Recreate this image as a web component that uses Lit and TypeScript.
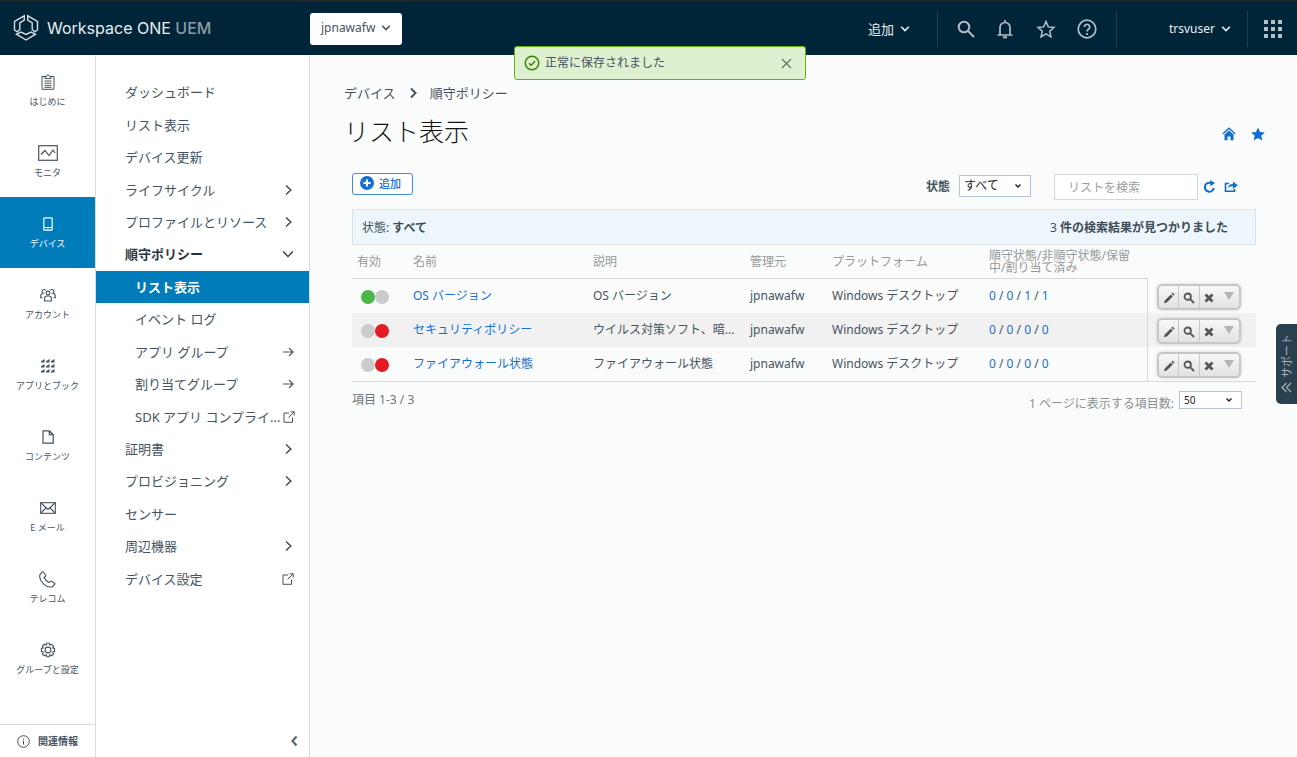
import { LitElement, html, svg, css, nothing } from "lit";
import { customElement, state } from "lit/decorators.js";
import { classMap } from "lit/directives/class-map.js";

const icon = (w: number, h: number, body: unknown, sw = 1) => html`<svg
  width=${w} height=${h} viewBox="0 0 ${w} ${h}" fill="none" stroke="currentColor"
  stroke-width=${sw} aria-hidden="true">${body}</svg>`;

const chevronDown = icon(10, 8, svg`<path d="M1.200 1.800L5 5.600l3.800-3.800"/>`, 1.6);
const chevronDownThin = icon(12, 12, svg`<path d="M1.200 3.500L6 8.600l4.800-5.100"/>`, 1.3);
const chevronRight = icon(12, 12, svg`<path d="M4 1.500l4.800 4.500L4 10.500"/>`, 1.6);
const arrowRight = icon(12, 12, svg`<path d="M1 6h10M7 2l4 4-4 4"/>`, 1.1);
const external = icon(12, 12, svg`<path d="M6 2H1v9.300h8.500V6.500M7.500.8h3.700v3.700M11.200.8L5.500 6.500"/>`);
const magnifier = icon(18, 18, svg`<circle cx="7" cy="7" r="5.300"/><path d="M11 11l6 6"/>`, 2);
const bell = icon(18, 20, svg`<path d="M9 1v2M4 15.500V8.500a5 5 0 0 1 10 0v7M1.500 16h15"/><path d="M7 18.300h4" stroke-width="2"/>`, 1.7);
const starOutline = icon(20, 18, svg`<path d="M10 1.500l2.300 5.400 5.700.5-4.300 3.800 1.300 5.700-5-3-5 3 1.300-5.700L2 7.400l5.700-.5z"/>`, 1.5);
const help = icon(20, 20, svg`<circle cx="10" cy="10" r="8.800"/><path d="M7.300 8a2.700 2.700 0 1 1 4.100 2.300c-1 .6-1.400 1-1.400 2.200M10 14v2"/>`, 1.7);
const appsGrid = icon(18, 18, svg`<g fill="currentColor" stroke="none">${[0, 7, 14].map((x) =>
  [0, 7, 14].map((y) => svg`<rect x=${x} y=${y} width="4" height="4"/>`))}</g>`);
const logo = icon(26, 28, svg`<path d="M11.300 1.800v4.400L6.800 9v6.500l-2.600 2.300L1.500 16V7.400z"/>
  <path d="M14.700 1.800v4.400L19.200 9v6.500l2.600 2.300 2.700-1.800V7.400z"/>
  <path d="M3.500 20.200L8 18l5 2.400L18 18l4.500 2.200L13 26z"/>`, 1.4);

const rail = {
  clipboard: icon(14, 16, svg`<path d="M4.500 2.500H1v12.800h12V2.500H9.500"/><path d="M4 4.500V2.500h1.500a1.500 1.500 0 0 1 3 0H10v2z"/><path d="M3.500 7h7M3.500 9.200h7M3.500 11.400h7M3.500 13.400h7"/>`),
  monitor: icon(20, 16, svg`<rect x=".7" y=".7" width="18.600" height="14.600"/><path d="M3 9.500L7 5.500l4 5 4-5.500 2 3"/>`, 1.2),
  phone: icon(10, 14, svg`<rect x=".8" y=".8" width="8.400" height="12.400" rx="1"/><path d="M1 10.500h8M4.300 12h1.400"/>`, 1.2),
  people: icon(16, 14, svg`<circle cx="8" cy="5" r="1.900"/><path d="M4.600 13V10.500A2.500 2.500 0 0 1 7 8h2a2.500 2.500 0 0 1 2.400 2.500V13z"/><path d="M5.700 2.300A2 2 0 1 0 3.200 5.300C1.500 5.600.7 6.800.7 8.200v1.600h1.800M10.300 2.300a2 2 0 1 1 2.500 3c1.700.3 2.500 1.500 2.500 2.900v1.600h-1.800"/>`, 1.1),
  apps: icon(14, 14, svg`<g fill="currentColor" stroke="none">${[0, 5, 10].map((x) =>
    [0, 5, 10].map((y) => svg`<path d="M${x + 3.5} ${y}v3.500h-3.500v-1.200z"/>`))}</g>`),
  file: icon(12, 14, svg`<path d="M1 .8h6.500L11.200 4.500v8.700H1zM7.300.8v3.900h3.900"/>`, 1.2),
  mail: icon(16, 12, svg`<rect x=".7" y=".7" width="14.600" height="10.600"/><path d="M1 1l7 6.500L15 1M1 11l4.800-5M15 11l-4.800-5"/>`, 1.1),
  call: icon(17, 17, svg`<path d="M1 3.500L3.300 1.200c.4-.4 1-.4 1.300.1L6.500 4.200c.3.500.2 1-.2 1.300L5.200 6.500c.8 2.200 2.600 4 4.900 5l1.200-1.200c.4-.4.9-.4 1.300-.1l2.900 2c.5.300.5.900.1 1.300l-2.200 2.200C7 17.500-.8 9.800 1 3.500z"/>`, 1.1),
  gear: icon(16, 16, svg`<circle cx="8" cy="8" r="2.900"/><path d="M6.700.8h2.600l.6 2 1.800-1 1.900 1.900-1 1.800 2 .6v2.900l-2 .6 1 1.800-1.900 1.900-1.800-1-.6 2H6.700l-.6-2-1.800 1-1.900-1.900 1-1.800-2-.6V6.100l2-.6-1-1.800 1.900-1.900 1.800 1z" transform="translate(0 .4)"/>`, 1.1),
};

const railItems: [unknown, string][] = [
  [rail.clipboard, "はじめに"],
  [rail.monitor, "モニタ"],
  [rail.phone, "デバイス"],
  [rail.people, "アカウント"],
  [rail.apps, "アプリとブック"],
  [rail.file, "コンテンツ"],
  [rail.mail, "E メール"],
  [rail.call, "テレコム"],
  [rail.gear, "グループと設定"],
];

interface NavItem { label: string; mark?: unknown; kind?: "open" | "sub" | "current"; }

const navItems: NavItem[] = [
  { label: "ダッシュボード" },
  { label: "リスト表示" },
  { label: "デバイス更新" },
  { label: "ライフサイクル", mark: chevronRight },
  { label: "プロファイルとリソース", mark: chevronRight },
  { label: "順守ポリシー", mark: chevronDownThin, kind: "open" },
  { label: "リスト表示", kind: "current" },
  { label: "イベント ログ", kind: "sub" },
  { label: "アプリ グループ", mark: arrowRight, kind: "sub" },
  { label: "割り当てグループ", mark: arrowRight, kind: "sub" },
  { label: "SDK アプリ コンプライ...", mark: external, kind: "sub" },
  { label: "証明書", mark: chevronRight },
  { label: "プロビジョニング", mark: chevronRight },
  { label: "センサー" },
  { label: "周辺機器", mark: chevronRight },
  { label: "デバイス設定", mark: external },
];

const policies = [
  { on: true, name: "OS バージョン", note: "OS バージョン", counts: [0, 0, 1, 1] },
  { on: false, name: "セキュリティポリシー", note: "ウイルス対策ソフト、暗...", counts: [0, 0, 0, 0] },
  { on: false, name: "ファイアウォール状態", note: "ファイアウォール状態", counts: [0, 0, 0, 0] },
];

const base = css`
  :host { display: block; }
  * { box-sizing: border-box; }
  svg { display: block; flex: none; }
  a { color: inherit; text-decoration: none; }
  button, input, select { font: inherit; color: inherit; margin: 0; }
  button { background: none; border: 0; padding: 0; cursor: pointer; }
`;

@customElement("app-header")
class AppHeader extends LitElement {
  static styles = [base, css`
    .bar { display: flex; height: 55px; background: #002538; border-top: 2px solid #222628; color: #e8eef1; font-size: 13px; }
    .brand { width: 310px; display: flex; align-items: center; gap: 8px; padding: 0 0 2px 13px; font: 16px/24px Inter, sans-serif; }
    .mark { color: #d5dde1; }
    .uem { color: #8b9ba5; font-weight: 500; }
    .org { align-self: center; height: 32px; padding: 0 11px; display: flex; align-items: center; gap: 6px; background: #fff; color: #46535f; border-radius: 3px; font-size: 12px; }
    .org { padding-bottom: 2px; }
    .block { display: flex; align-items: center; gap: 6px; border-right: 1px solid #1d4053; height: 36px; align-self: center; }
    .add { margin-left: auto; padding-right: 27px; }
    .tools { width: 179px; justify-content: space-between; padding: 0 19px; color: #b3bec5; }
    .user { width: 131px; justify-content: flex-end; padding-right: 16px; font-size: 12px; }
    .apps { width: 49px; display: grid; place-items: center; color: #b3bec5; }
  `];
  render() {
    return html`<header class="bar">
      <a class="brand" href="#"><span class="mark">${logo}</span><span>Workspace ONE <span class="uem">UEM</span></span></a>
      <button class="org">jpnawafw ${chevronDown}</button>
      <button class="block add">追加 ${chevronDown}</button>
      <div class="block tools">
        <button aria-label="検索">${magnifier}</button>
        <button aria-label="通知">${bell}</button>
        <button aria-label="お気に入り">${starOutline}</button>
        <button aria-label="ヘルプ">${help}</button>
      </div>
      <button class="block user">trsvuser ${chevronDown}</button>
      <button class="apps" aria-label="アプリ">${appsGrid}</button>
    </header>`;
  }
}

@customElement("app-rail")
class AppRail extends LitElement {
  static styles = [base, css`
    :host { display: flex; width: 96px; background: #fff; border-right: 1px solid #d9dcde; }
    .rail { flex: 1; display: flex; flex-direction: column; min-width: 0; }
    .item { height: 71px; display: flex; flex-direction: column; align-items: center; gap: 3px; padding-top: 17px; font-size: 9px; line-height: 14px; white-space: nowrap; }
    .glyph { height: 20px; display: grid; place-items: center; }
    .active { background: #007cbb; color: #fff; }
    .about { margin-top: auto; height: 33px; border-top: 1px solid #d9dcde; display: flex; align-items: center; gap: 8px; padding-left: 17px; font-size: 10px; font-weight: 700; }
  `];
  render() {
    return html`<nav class="rail" aria-label="メイン">
      ${railItems.map(([glyph, label]) => html`<a href="#" class=${classMap({ item: true, active: label === "デバイス" })}>
        <span class="glyph">${glyph}</span><span>${label}</span></a>`)}
      <a href="#" class="about">${icon(13, 13, svg`<circle cx="6.500" cy="6.500" r="5.800"/><path d="M6.500 5.500v4M6.500 3.500v1"/>`)}<span>関連情報</span></a>
    </nav>`;
  }
}

@customElement("app-subnav")
class AppSubnav extends LitElement {
  static styles = [base, css`
    :host { display: flex; width: 214px; background: #fff; border-right: 1px solid #d9dcde; }
    .nav { flex: 1; min-width: 0; display: flex; flex-direction: column; padding-top: 21px; }
    .list { list-style: none; margin: 0; padding: 0; display: grid; grid-template-columns: minmax(0, 1fr); grid-auto-rows: 1fr; height: 519px; }
    .link { height: 100%; display: flex; align-items: center; gap: 2px; padding: 0 15px 0 29px; font-size: 13px; line-height: 20px; }
    .label { flex: 1; white-space: nowrap; }
    .open { font-weight: 700; color: #29333d; }
    .sub, .current { padding-left: 39px; }
    .current { background: #007cbb; color: #fff; font-weight: 700; }
    .fold { margin: auto 11px 10px auto; color: #5f6b75; }
  `];
  render() {
    return html`<nav class="nav" aria-label="デバイス">
      <ul class="list">${navItems.map((n) => html`<li><a href="#" class="link ${n.kind ?? ""}">
        <span class="label">${n.label}</span>${n.mark ?? nothing}</a></li>`)}</ul>
      <button class="fold" aria-label="メニューを折りたたむ">${icon(8, 12, svg`<path d="M6.500 1.500L2.500 6l4 4.500"/>`, 2.4)}</button>
    </nav>`;
  }
}

@customElement("policy-list")
class PolicyList extends LitElement {
  static styles = [base, css`
    .panel { font-size: 12px; line-height: 18px; }
    .toolbar { display: flex; height: 28px; align-items: center; }
    .add { align-self: flex-start; height: 22px; width: 61px; display: flex; align-items: center; justify-content: center; gap: 5px; padding-right: 4px; border: 1px solid #3f8edb; border-radius: 3px; background: #fff; color: #1670cf; font-size: 11px; font-weight: 500; }
    .add svg { margin-bottom: 3px; }
    .filter { margin-left: auto; display: flex; align-items: center; gap: 9px; font-weight: 700; color: #4a5560; }
    .pick { position: relative; display: flex; align-items: center; font-weight: 400; color: #222; }
    .pick select { appearance: none; background: #fff; border: 1px solid #b5c5d2; border-radius: 0; height: 22px; width: 72px; padding: 0 4px 1px; line-height: 18px; color: #222; }
    .filter .pick { margin-bottom: 2px; }
    .pick svg { position: absolute; right: 9px; pointer-events: none; }
    .search { margin-left: 23px; width: 144px; height: 26px; border: 1px solid #d3d8da; background: #fff; padding: 0 13px; }
    .search::placeholder { color: #9a9fa3; }
    .tool { color: #0f6dd0; }
    .refresh { margin-left: 5px; }
    .share { margin: 0 18px 0 8px; }
    .summary { margin-top: 8px; height: 36px; display: flex; align-items: center; justify-content: space-between; padding: 1px 27px 0 9px; background: #edf6fa; border: 1px solid #dbe2e5; }
    .summary b { color: #3f4b57; }
    .count { font-weight: 400; }
    .grid { width: 100%; table-layout: fixed; border-collapse: separate; border-spacing: 0; }
    .c-on { width: 56px; } .c-note { width: 157px; } .c-org { width: 82px; } .c-os { width: 157px; } .c-num { width: 164px; } .c-act { width: 108px; }
    th { height: 34px; padding: 0 5px; text-align: left; font-weight: 400; line-height: 12px; color: #95999c; border-bottom: 1px solid #d5d8d9; }
    .blank { border-bottom-color: transparent; }
    td { height: 34px; padding: 0 5px; white-space: nowrap; }
    th, td { padding-right: 4px; }
    .numbers { border-right: 1px solid #d5d8d9; }
    .even td { background: #f1f1f1; }
    .last td { height: 35px; border-bottom: 1px solid #d5d8d9; }
    .name, .numbers a { color: #1670cf; }
    .lights { display: flex; padding: 1px 0 0 4px; }
    .light { width: 14px; height: 14px; border-radius: 50%; background: #cbcbcb; }
    .green { background: #4cb648; } .red { background: #e31b23; }
    td.actions { padding: 2px 0 0 9px; }
    .group { display: inline-flex; vertical-align: middle; width: 84px; height: 26px; border: 2px solid #c6c6c6; border-radius: 5px; background: linear-gradient(#f8f8f8, #e2e2e2); box-shadow: 0 0 3px #ccc; color: #555; }
    .group button { flex: 1; display: grid; place-items: center; padding-top: 2px; border-left: 1px solid #c9c9c9; }
    .group button:first-child { border-left: 0; }
    .group .more { border-left-color: transparent; color: #b5b5b5; padding: 0 0 2px; }
    .foot { display: flex; justify-content: space-between; align-items: flex-start; padding: 9px 14px 0 0; color: #6c757c; }
    .size { display: flex; align-items: flex-start; gap: 5px; color: #8b9094; }
    .size label { padding-top: 4px; }
    .size select { width: 63px; height: 18px; font-size: 10px; line-height: 14px; }
  `];
  @state() private rows = policies;
  render() {
    const caret = icon(8, 6, svg`<path d="M1.500 1.500L4 4l2.500-2.500"/>`, 1.4);
    return html`<section class="panel">
      <div class="toolbar">
        <button class="add">${icon(14, 14, svg`<circle cx="7" cy="7" r="7" fill="#1670cf" stroke="none"/><path d="M7 3.500v7M3.500 7h7" stroke="#fff" stroke-width="2"/>`)}追加</button>
        <div class="filter"><label for="status">状態</label>
          <span class="pick"><select id="status"><option>すべて</option></select>${caret}</span></div>
        <input class="search" type="text" placeholder="リストを検索" aria-label="リストを検索">
        <button class="tool refresh" aria-label="更新">${icon(13, 14, svg`<path d="M8 3A4.500 4.500 0 1 0 10.800 8"/><path d="M7 0l5 3-4.500 3.300z" fill="currentColor" stroke="none"/>`, 2)}</button>
        <button class="tool share" aria-label="エクスポート">${icon(14, 12, svg`<path d="M5 2.500H1.500v7.800h9V8"/><path d="M4 7.500C4.300 4.300 6 3 9 3V.5l4.800 3.700L9 8V5.300C6.500 5.200 5 6 4 7.500z" fill="currentColor" stroke="none"/>`, 1.6)}</button>
      </div>
      <div class="summary"><span>状態: <b>すべて</b></span><b><span class="count">3</span> 件の検索結果が見つかりました</b></div>
      <table class="grid">
        <colgroup><col class="c-on"><col><col class="c-note"><col class="c-org"><col class="c-os"><col class="c-num"><col class="c-act"></colgroup>
        <thead><tr><th>有効</th><th>名前</th><th>説明</th><th>管理元</th><th>プラットフォーム</th><th>順守状態/非順守状態/保留中/割り当て済み</th><th class="blank"></th></tr></thead>
        <tbody>${this.rows.map((r, i) => html`<tr class=${classMap({ even: i % 2 === 1, last: i === this.rows.length - 1 })}>
          <td><span class="lights"><i class=${classMap({ light: true, green: r.on })}></i><i class=${classMap({ light: true, red: !r.on })}></i></span></td>
          <td><a class="name" href="#">${r.name}</a></td>
          <td>${r.note}</td><td>jpnawafw</td><td>Windows デスクトップ</td>
          <td class="numbers">${r.counts.map((c, k) => html`${k ? " / " : ""}<a href="#">${c}</a>`)}</td>
          <td class="actions"><span class="group">
            <button aria-label="編集">${icon(12, 12, svg`<path d="M1 11.200l.8-2.800 6-6 2 2-6 6zM8.500 1.700L9.600.6l2 2-1.100 1.100z" fill="currentColor" stroke="none"/>`)}</button>
            <button aria-label="表示">${icon(12, 12, svg`<circle cx="4.700" cy="4.700" r="3.200"/><path d="M7.200 7.200l3.800 3.800"/>`, 1.8)}</button>
            <button aria-label="削除">${icon(10, 10, svg`<path d="M1.500 1.500l7 7M8.500 1.500l-7 7"/>`, 2.8)}</button>
            <button class="more" aria-label="その他">${icon(10, 8, svg`<path d="M0 0h10L5 8z" fill="currentColor" stroke="none"/>`)}</button>
          </span></td></tr>`)}</tbody>
      </table>
      <div class="foot"><span>項目 1-3 / 3</span>
        <span class="size"><label for="size">1 ページに表示する項目数:</label>
          <span class="pick"><select id="size"><option>50</option></select>${caret}</span></span></div>
    </section>`;
  }
}

@customElement("app-root")
class AppRoot extends LitElement {
  static styles = [base, css`
    :host { display: flex; flex-direction: column; min-height: 100vh; position: relative; background: #fafcfb; color: #46535f; font: 13px/20px "Noto Sans", "Noto Sans CJK JP", sans-serif; }
    .body { flex: 1; display: flex; }
    .main { flex: 1; min-width: 0; padding: 28px 41px 0 34px; }
    .crumbs { display: flex; align-items: center; gap: 11px; }
    .heading { display: flex; align-items: flex-end; justify-content: space-between; margin-top: 9px; }
    h1 { margin: 0; font-size: 25px; line-height: 36px; font-weight: 300; color: #111; font-family: "Noto Sans CJK JP", sans-serif; }
    .quick { display: flex; gap: 15px; color: #0f6dd0; margin-right: -9px; padding-bottom: 7px; }
    .content { display: block; margin: 25px 0 0 8px; }
    .toast { position: absolute; top: 46px; left: 514px; width: 292px; height: 34px; display: flex; align-items: center; gap: 5px; padding: 0 13px 0 9px; background: #dff0d0; border: 1px solid #60b515; border-radius: 3px; font-size: 12px; }
    .ok { color: #318700; }
    .close { margin-left: auto; color: #6a746c; }
    .support { position: absolute; right: 0; top: 324px; width: 21px; height: 80px; display: flex; flex-direction: column; align-items: center; justify-content: space-between; padding: 10px 0 11px; background: #29404f; color: #aab6be; border-radius: 5px 0 0 5px; font-size: 11px; line-height: 14px; }
    .turned { writing-mode: vertical-rl; text-orientation: sideways; transform: rotate(180deg); }
  `];
  render() {
    return html`
      <app-header></app-header>
      <div class="body">
        <app-rail></app-rail>
        <app-subnav></app-subnav>
        <main class="main">
          <nav class="crumbs" aria-label="パンくず"><a href="#">デバイス</a>${icon(12, 12, svg`<path d="M4 1.500L8.500 6 4 10.500"/>`, 2)}<a href="#">順守ポリシー</a></nav>
          <div class="heading"><h1>リスト表示</h1>
            <div class="quick">
              <button aria-label="ホーム">${icon(14, 14, svg`<path d="M.8 7L7 1.200 13.200 7" stroke-width="1.300"/><path d="M2.500 7.500L7 3.400l4.500 4.100v5.700H8.500V9.500h-3v3.700h-3z" fill="currentColor" stroke="none"/>`)}</button>
              <button aria-label="お気に入りに追加">${icon(14, 14, svg`<path d="M7 .5l2 4.400 4.800.5-3.500 3.300 1 4.800L7 11.100l-4.300 2.400 1-4.800L.2 5.400 5 4.900z" fill="currentColor" stroke="none"/>`)}</button>
            </div></div>
          <policy-list class="content"></policy-list>
        </main>
      </div>
      <div class="toast" role="status"><span class="ok">${icon(16, 16, svg`<circle cx="8" cy="8" r="6.700"/><path d="M5 8.200l2.200 2.100L11 6.300"/>`, 1.5)}</span>正常に保存されました
        <button class="close" aria-label="閉じる">${icon(11, 11, svg`<path d="M1 1l9 9M10 1l-9 9"/>`, 1.3)}</button></div>
      <button class="support"><span class="turned">サポート</span>${icon(11, 11, svg`<path d="M5.500 1L1 5.500 5.500 10M10 1L5.500 5.500 10 10"/>`, 1.1)}</button>`;
  }
}
